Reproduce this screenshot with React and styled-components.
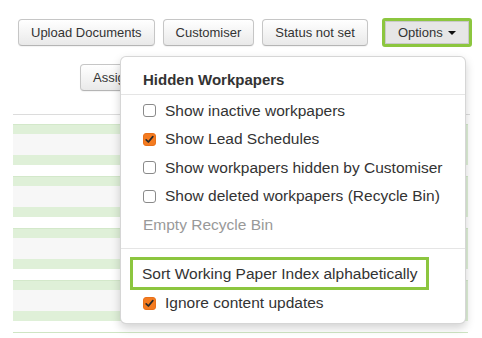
import React from 'react';
import styled, { createGlobalStyle } from 'styled-components';

const GlobalStyle = createGlobalStyle`
    body {
        margin: 0;
        background: #ffffff;
        font-family: "Liberation Sans", Arial, Helvetica, sans-serif;
        color: #333333;
    }
`;

const Page = styled.div`
    position: relative;
    width: 482px;
    height: 338px;
    overflow: hidden;
`;

const Toolbar = styled.div`
    display: flex;
    align-items: center;
    gap: 8px;
    height: 29px;
    padding: 18px 0 0 18px;
`;

const SecondRow = styled.div`
    display: flex;
    padding-left: 80px;
    margin-top: 17px;
`;

const Button = styled.button`
    box-sizing: border-box;
    height: 27px;
    padding: 0 12px;
    display: inline-flex;
    align-items: center;
    font-family: inherit;
    font-size: 13px;
    color: #333333;
    background: linear-gradient(#ffffff, #e9e9e9);
    border: 1px solid #c6c6c6;
    border-bottom-color: #b5b5b5;
    border-radius: 4px;
    box-shadow: 0 1px 1px rgba(0, 0, 0, 0.05);
    white-space: nowrap;
`;

const OptionsButton = styled(Button)`
    height: 29px;
    margin-left: 6px;
    width: 90px;
    justify-content: center;
    background: #e6e6e6;
    border: 3px solid #8cc63f;
    border-radius: 3px;
    box-shadow: inset 0 0 0 1px #c9c9c9;
`;

const Caret = styled.span`
    display: inline-block;
    width: 0;
    height: 0;
    margin-left: 5px;
    border-top: 4px solid #111111;
    border-left: 4px solid transparent;
    border-right: 4px solid transparent;
`;

const Table = styled.div`
    width: 457px;
    margin: 23px 0 0 13px;
    border-top: 1px solid #dcdcdc;
    padding-top: 9px;
    display: flex;
    flex-direction: column;
    gap: 11px;
`;

const RowGroup = styled.div`
    margin-right: 2px;
    padding: 9px 2px 10px 0;
    background: #dff0d8;
    border-top: 1px solid #d3e8ca;
`;

const RowBody = styled.div`
    height: 21px;
    background: #f7f7f7;
`;

const RowEdge = styled.div`
    margin-right: 2px;
    height: 1px;
    background: #cfe5c4;
`;

const Menu = styled.div`
    position: absolute;
    left: 120px;
    top: 56px;
    width: 346px;
    box-sizing: border-box;
    padding: 7px 0 5px;
    background: #ffffff;
    border: 1px solid rgba(0, 0, 0, 0.16);
    border-radius: 6px;
    box-shadow: 0 4px 10px rgba(0, 0, 0, 0.18);
`;

const MenuHeader = styled.div`
    height: 30px;
    line-height: 31px;
    padding: 0 22px;
    font-size: 15px;
    font-weight: bold;
    color: #333333;
`;

const Divider = styled.div`
    height: 1px;
    background: #e5e5e5;
    margin: ${p => p.$spaced ? '8.5px 0' : '0'};
`;

const ItemList = styled.div`
    padding-top: 1.5px;
`;

const Item = styled.div`
    height: 28.5px;
    display: flex;
    align-items: center;
    gap: 9px;
    padding: 0 22px;
    font-size: 15.5px;
    color: ${p => p.$disabled ? '#999999' : '#333333'};
    white-space: nowrap;
    margin-top: ${p => p.$pull ? '-1px' : '0'};
`;

const Highlight = styled.div`
    box-sizing: border-box;
    width: fit-content;
    height: 33px;
    margin-left: 9px;
    padding: 0 9px;
    display: flex;
    align-items: center;
    font-size: 15.5px;
    color: #333333;
    border: 3px solid #8cc63f;
    white-space: nowrap;
`;

const Box = styled.span`
    box-sizing: border-box;
    flex: none;
    width: 13px;
    height: 13px;
    border-radius: 3px;
    display: inline-flex;
    align-items: center;
    justify-content: center;
    background: ${p => p.$checked ? '#f47b20' : '#ffffff'};
    border: 1px solid ${p => p.$checked ? '#e8711a' : '#8a8a8a'};
`;

const Checkbox = ({ checked }) => (
    <Box $checked={checked}>
        {checked && (
            <svg width="9" height="9" viewBox="0 0 9 9">
                <path d="M1.2 4.8 L3.4 7 L7.8 1.6" fill="none" stroke="#2a2a2a" strokeWidth="1.7" strokeLinecap="round" strokeLinejoin="round" />
            </svg>
        )}
    </Box>
);

const hiddenOptions = [
    { label: 'Show inactive workpapers', checked: false },
    { label: 'Show Lead Schedules', checked: true },
    { label: 'Show workpapers hidden by Customiser', checked: false },
    { label: 'Show deleted workpapers (Recycle Bin)', checked: false },
];

const App = () => {
    return (
        <Page>
            <GlobalStyle />
            <Toolbar>
                <Button>Upload Documents</Button>
                <Button>Customiser</Button>
                <Button>Status not set</Button>
                <OptionsButton>Options<Caret /></OptionsButton>
            </Toolbar>
            <SecondRow>
                <Button>Assign Staff</Button>
            </SecondRow>
            <Table>
                {[0, 1, 2, 3].map(i => (
                    <RowGroup key={i}><RowBody /></RowGroup>
                ))}
                <RowEdge />
            </Table>
            <Menu>
                <MenuHeader>Hidden Workpapers</MenuHeader>
                <Divider />
                <ItemList>
                    {hiddenOptions.map(o => (
                        <Item key={o.label}><Checkbox checked={o.checked} />{o.label}</Item>
                    ))}
                    <Item $disabled>Empty Recycle Bin</Item>
                </ItemList>
                <Divider $spaced />
                <Highlight>Sort Working Paper Index alphabetically</Highlight>
                <Item $pull><Checkbox checked />Ignore content updates</Item>
            </Menu>
        </Page>
    );
}

export default App;
